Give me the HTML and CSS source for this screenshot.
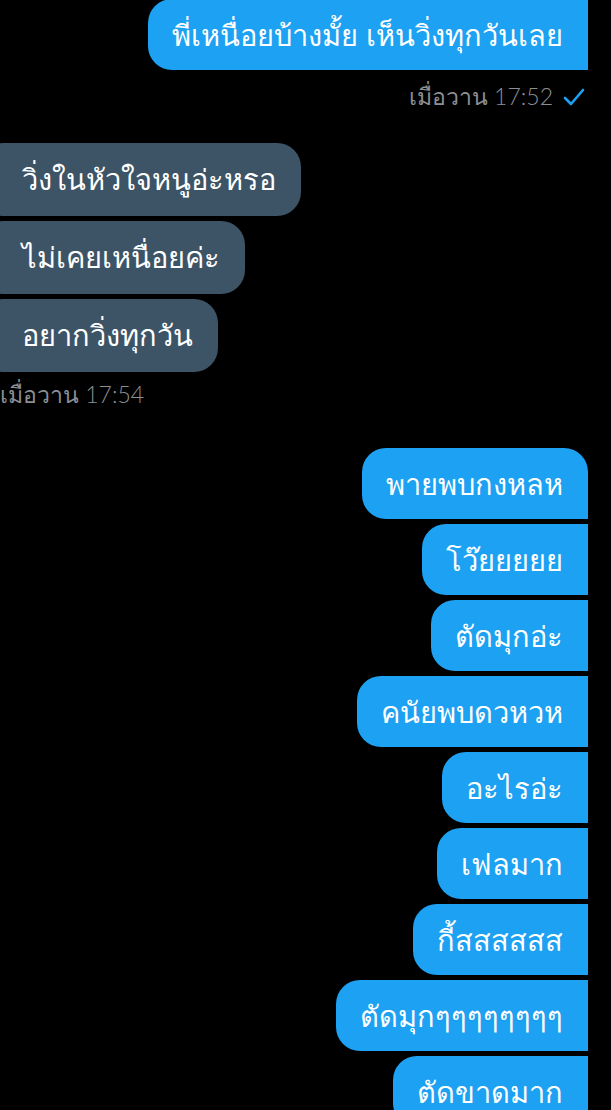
FILE: index.html
```html
<!DOCTYPE html>
<html>
<head>
    <meta charset="UTF-8">
    <title>แชท</title>
    <link rel="stylesheet" href="styles.css">
</head>
<body>
    <div class="chat">
        <!-- ข้อความที่ส่งออก -->
        <div class="group sent first-group">
            <div class="bubble">พี่เหนื่อยบ้างมั้ย เห็นวิ่งทุกวันเลย</div>
            <div class="meta">
                <span class="time">เมื่อวาน 17:52</span>
                <svg class="check" width="22" height="20" viewBox="0 0 22 20">
                    <path d="M2 11 L8 17 L20 3" fill="none" stroke="#1da1f2" stroke-width="2.6" stroke-linecap="round" stroke-linejoin="round"/>
                </svg>
            </div>
        </div>

        <!-- ข้อความที่ได้รับ -->
        <div class="group received">
            <div class="bubble">วิ่งในหัวใจหนูอ่ะหรอ</div>
            <div class="bubble">ไม่เคยเหนื่อยค่ะ</div>
            <div class="bubble">อยากวิ่งทุกวัน</div>
            <div class="meta">
                <span class="time">เมื่อวาน 17:54</span>
            </div>
        </div>

        <div class="group sent">
            <div class="bubble top">พายพบกงหลห</div>
            <div class="bubble">โว๊ยยยยย</div>
            <div class="bubble">ตัดมุกอ่ะ</div>
            <div class="bubble">คนัยพบดวหวห</div>
            <div class="bubble">อะไรอ่ะ</div>
            <div class="bubble">เฟลมาก</div>
            <div class="bubble">กี้สสสสสส</div>
            <div class="bubble">ตัดมุกๆๆๆๆๆๆๆๆ</div>
            <div class="bubble">ตัดขาดมาก</div>
        </div>
    </div>
</body>
</html>
```
FILE: styles.css
```css
/* หน้าจอแชทโหมดมืด */
body {
    margin: 0;
    padding: 0;
    background-color: #000;
    font-family: "Noto Sans", sans-serif;
    overflow: hidden;
    height: 1110px;
}

.chat {
    display: flex;
    flex-direction: column;
}

.group {
    display: flex;
    flex-direction: column;
    gap: 5px;
}

.sent {
    align-items: flex-end;
    margin-right: 23px;
    margin-top: 35px;
}

.first-group {
    margin-top: -1px;
}

.received {
    align-items: flex-start;
    margin-left: -20px;
    margin-top: 28px;
}

.bubble {
    font-size: 29px;
    line-height: 36px;
    color: #fff;
    padding: 18px 25px 17px 24px;
    border-radius: 24px;
}

.sent .bubble {
    background-color: #1da1f2;
    border-top-right-radius: 0;
    border-bottom-right-radius: 0;
}

.sent .bubble.top {
    border-top-right-radius: 24px;
}

.received .bubble {
    background-color: #3d5466;
    padding: 18px 25px 19px 42px;
}

.meta {
    display: flex;
    align-items: center;
    gap: 10px;
    margin-top: 4px;
}

.time {
    font-family: Lato, "Noto Sans", sans-serif;
    font-weight: 300;
    font-size: 23px;
    color: #8b8f94;
}

.received .meta {
    margin-left: 20px;
    margin-top: 0;
}

.sent .meta {
    margin-right: 3px;
}
```
